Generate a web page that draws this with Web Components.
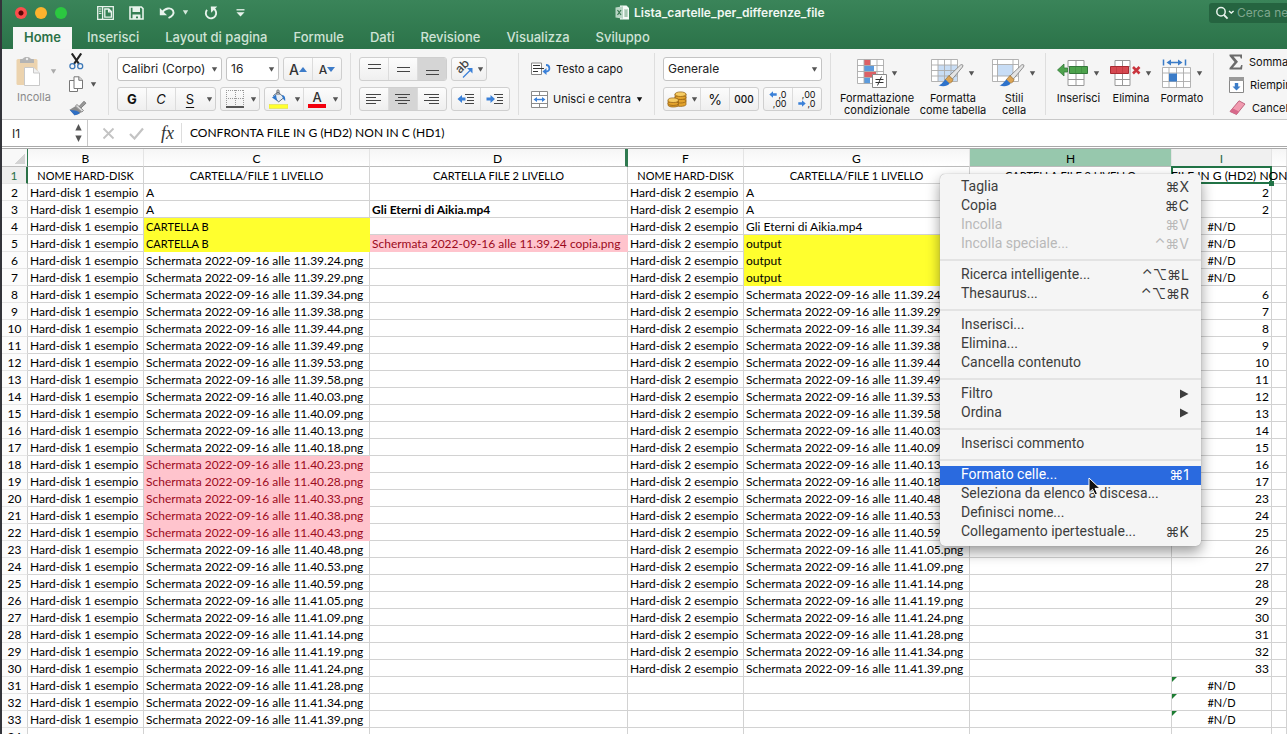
<!DOCTYPE html>
<html lang="it">
<head>
<meta charset="utf-8">
<title>Lista_cartelle_per_differenze_file</title>
<style>
html, body { height: 100%; margin: 0; }
body { overflow: hidden; background: #33343a; font-family: Inter, "Liberation Sans", sans-serif; }
</style>
</head>
<body>
<xl-window></xl-window>
<script>
const ICONS = {
  layout: [17, 14, '<g fill="none" stroke="#e8f3ec" stroke-width="1.3"><path d="M.7.7h15.6v12.6H.7zM5.6.7v12.6M7.8 3h4l2.6 2.6v5.6H7.8zM11.6 3v2.8h2.8"/><path d="M1.8 3h2.6M1.8 5.2h2.6M1.8 7.4h2.6" stroke-width="1"/></g>'],
  save: [15, 14, '<path d="M1 1h11.4L14 2.600V13H1z" fill="none" stroke="#e8f3ec" stroke-width="1.600"/><path d="M3.500 1h7.500v5H3.500zM3.500 8.500h8V13H9V10.500H7V13H3.500z" fill="#e8f3ec"/>'],
  undo: [17, 13, '<path d="M3 6.500C6 2 12 1 14 4.500c1.600 3-.5 5.800-4.500 7.500" fill="none" stroke="#e8f3ec" stroke-width="1.900"/><path d="M.8 2v7.200H8z" fill="#e8f3ec"/>'],
  redo: [14, 14, '<path d="M9.500 2.600A5.200 5.200 0 1 1 3 3.800" fill="none" stroke="#e8f3ec" stroke-width="1.900"/><path d="M6.800.6h6.400L7.200 6.800z" fill="#e8f3ec"/>'],
  more: [9, 8, '<path d="M.5.800h8" stroke="#e8f3ec" stroke-width="1.300"/><path d="M.5 3.200h8L4.500 7.600z" fill="#e8f3ec"/>'],
  book: [15, 15, '<path d="M5 .5h6.500L14 3v11.500H5z" fill="#f4f9f6"/><path d="M9 5h4M9 7h4M9 9h4M9 11h4M11 5v7" stroke="#7aa98c" stroke-width=".8"/><path d="M.5 2.500 8 1.200v12.600L.5 12.500z" fill="#b9d6c5"/><path d="M2.500 5l3.500 5M6 5l-3.500 5" stroke="#39764f" stroke-width="1.200"/>'],
  search: [20, 14, '<circle cx="6" cy="5.800" r="4.200" fill="none" stroke="#e8f3ec" stroke-width="1.500"/><path d="M9 9l3.600 3.600" stroke="#e8f3ec" stroke-width="1.800"/><path d="M14 5l2.300 2L18.600 5" fill="none" stroke="#e8f3ec" stroke-width="1.500"/>'],
  caret: [7, 5, '<path d="M.8.300h5.400L3.500 4.700z" fill="currentColor"/>'],
  paste: [25, 31, '<rect x=".5" y="3" width="21" height="26" rx="1.500" fill="#ecd3ae"/><path d="M4 7V3.800C4 3 5 3 7 2.800 7.500.5 14 .5 14.600 2.800c2 .2 3.400.2 3.400 1V7z" fill="#b4b4b4"/><circle cx="11" cy="3" r="1.200" fill="#eee"/><path d="M8.500 11.500h9l6 5.500v12.500h-15z" fill="#fff" stroke="#c9c9c9"/><path d="M17.500 11.500V17h6" fill="#f1f1f1" stroke="#c9c9c9"/>'],
  cut: [15, 17, '<path d="M2.800.5 10 11M12.200.5 5 11" stroke="#222" stroke-width="2.200"/><circle cx="3.400" cy="13.200" r="2.500" fill="none" stroke="#3c78b8" stroke-width="1.300"/><circle cx="11.200" cy="13.200" r="2.500" fill="none" stroke="#3c78b8" stroke-width="1.300"/>'],
  copy: [15, 17, '<g fill="#fff" stroke="#777"><path d="M.5 4.500h7l1 1v10h-8z"/><path d="M5 .8h5L13.500 4v8.500H5z"/><path d="M9.800.8v3.500h3.700" fill="#ddd"/></g>'],
  brush: [18, 16, '<path d="M10 6.500 15 1.200 17 3.200 12 8z" fill="#999" stroke="#666" stroke-width=".7"/><path d="M8 4.500l6.500 6-1.600 1.600L6.400 6z" fill="#ddd" stroke="#777" stroke-width=".8"/><path d="M6.400 6.200l6.300 5.900C10 14 8 15 5.500 15.200 4 13.500 2 11.500.6 9.800z" fill="#8b8b8b"/><path d="M.6 9.800C3.500 10.500 8 10 11 13c-2 1.500-3.500 2-5.500 2.200z" fill="#2f6fc4"/>'],
  border: [18, 18, '<g fill="none" stroke="#999" stroke-dasharray="1 1"><path d="M.5 0v16M9.500 0v16M17.500 0v16M0 .5h18M0 8.500h18"/></g><path d="M0 17h18" stroke="#222" stroke-width="1.500"/>'],
  fill: [19, 20, '<path d="M4.500 6.500 9 3l6 5.500L9.500 13z" fill="#e8eef5" stroke="#5b6d80"/><path d="M8 6V1.800C8 .5 10 .5 10 1.800V6" fill="none" stroke="#666"/><path d="M13 6c2.600.4 3.500 2 3.200 6-1.800-1-2.600-3-3.200-6z" fill="#2f77cc"/><path d="M3 8.500 7 5.500l1 6.500z" fill="#2f77cc"/><rect y="15.500" width="19" height="4" fill="#ffff2e" stroke="#d6d64a" stroke-width=".5"/>'],
  orient: [18, 18, '<text x="0" y="0" transform="translate(5 14) rotate(-45)" font-family="Inter, sans-serif" font-size="12" font-weight="500" fill="#444">ab</text><path d="M8 17.500 15 10.500" stroke="#3a80d8" stroke-width="1.300"/><path d="M17.500 8v5.500L12 8z" fill="#3a80d8"/>'],
  top: [13, 12, '<path d="M0 1.500h13M0 5.500h13" stroke="#444"/>'],
  mid: [13, 12, '<path d="M0 4.500h13M0 8.500h13" stroke="#444"/>'],
  bot: [13, 12, '<path d="M0 7.500h13M0 11.500h13" stroke="#444"/>'],
  left: [16, 12, '<path d="M0 1.500h15M0 4.500h10M0 7.500h15M0 10.500h10" stroke="#444"/>'],
  center: [16, 12, '<path d="M0 1.500h15M3 4.500h9M0 7.500h15M3 10.500h9" stroke="#444"/>'],
  right: [16, 12, '<path d="M0 1.500h15M5 4.500h10M0 7.500h15M5 10.500h10" stroke="#444"/>'],
  outdent: [18, 12, '<path d="M8 1.500h9M10 4.500h7M10 7.500h7M8 10.500h9" stroke="#444"/><path d="M.5 6 5 2v2.500h3.500v3H5V10z" fill="#3a80d8"/>'],
  indent: [18, 12, '<path d="M8 1.500h9M11 4.500h6M11 7.500h6M8 10.500h9" stroke="#444"/><path d="M9 6 4.500 2v2.500H.5v3h4V10z" fill="#3a80d8"/>'],
  wrap: [20, 14, '<path d="M.5 1h10v11.500H.5z" fill="#fff" stroke="#888"/><path d="M2 3.500h7M2 6.500h11M2 9.500h5" stroke="#333"/><path d="M15 3c4 0 5 6 0 6.500" fill="none" stroke="#3a80d8" stroke-width="1.800"/><path d="M11.500 9.500 15.500 6v7z" fill="#3a80d8"/>'],
  merge: [17, 17, '<path d="M.5.5h16v16H.5zM.5 4.500h16M.5 12.500h16M8.500.5v4M8.500 12.500v4" fill="#fff" stroke="#8b8b8b"/><path d="M4 8.500h9" stroke="#3a80d8" stroke-width="1.400"/><path d="M2.500 8.500 6 6v5zM14.500 8.500 11 6v5z" fill="#3a80d8"/>'],
  coins: [20, 17, '<g fill="#e3a32c" stroke="#8f5c10" stroke-width=".7"><path d="M8 10v3.500c0 2.500 11 2.500 11 0V3H8z"/><ellipse cx="13.500" cy="10" rx="5.500" ry="2"/><ellipse cx="13.500" cy="6.500" rx="5.500" ry="2"/><ellipse cx="13.500" cy="3.200" rx="5.500" ry="2.300" fill="#f7cc62"/><path d="M1 9.500V14c0 2.700 10.500 2.700 10.500 0V9.500z"/><ellipse cx="6.200" cy="12.500" rx="5.200" ry="2"/><ellipse cx="6.200" cy="9.200" rx="5.200" ry="2.300" fill="#f7cc62"/></g>'],
  arrl: [8, 7, '<path d="M.3 3.500 4 .3v2h3.700v2.400H4v2z" fill="#3a80d8"/>'],
  arrr: [8, 7, '<path d="M7.700 3.500 4 .3v2H.3v2.400H4v2z" fill="#3a80d8"/>'],
  cond: [30, 29, '<path d="M.5.500h26v24H.5z" fill="#fff"/><path d="M7 .5h6v6H7zM7 12.500h12v6H7z" fill="#dd6166"/><path d="M7 6.500h10v6H7zM7 18.500h6v6H7z" fill="#5c9bdd"/><path d="M.5.500h26v24H.5zM7 .5v24M13.500.5v6M20 .5v24M.5 6.500h26M.5 12.500h26M.5 18.500h26" fill="none" stroke="#aaa" stroke-width=".9"/><path d="M15.500 15.500h14v13h-14z" fill="#fff" stroke="#888"/><path d="M18.500 20.500h8M18.500 23.500h8M24.500 17.500l-4 9" stroke="#333"/>'],
  table: [33, 28, '<path d="M.5.500h26v22H.5z" fill="#fff"/><path d="M7 6h19v16H7z" fill="#c8ddf5"/><path d="M.5.500h26v22H.5zM7 .5v22M13.500.5v22M20 .5v22M.5 6h26M.5 11.500h26M.5 17h26" fill="none" stroke="#aaa" stroke-width=".9"/><path d="M29.500 6 18 17l3 3.500L31.500 8c1-2 .0-3-2-2z" fill="#e4e4e4" stroke="#777" stroke-width=".8"/><path d="M18 16.500l4 4c-1 4-4 4-6 3l-2-2.500z" fill="#dba455" stroke="#8a6020" stroke-width=".6"/><path d="M14.500 20.500l4 4c-2 3-7 3.500-11 1.800 3.500-.8 4.500-3.800 7-5.800z" fill="#2f73cb"/>'],
  style: [33, 28, '<path d="M.5.500h26v22H.5z" fill="#fff"/><path d="M6 6h15v11H6z" fill="#c8ddf5"/><path d="M.5.500h26v22H.5zM5.500.5v22M21 .5v22M.5 5.500h26M.5 17h26" fill="none" stroke="#aaa" stroke-width=".9"/><path d="M29.500 6 18 17l3 3.500L31.500 8c1-2 .0-3-2-2z" fill="#e4e4e4" stroke="#777" stroke-width=".8"/><path d="M18 16.500l4 4c-1 4-4 4-6 3l-2-2.500z" fill="#dba455" stroke="#8a6020" stroke-width=".6"/><path d="M14.500 20.500l4 4c-2 3-7 3.500-11 1.800 3.500-.8 4.500-3.800 7-5.800z" fill="#2f73cb"/>'],
  ins: [32, 27, '<path d="M11 .5h16v25H11zM19 .5v25M11 6.500h16M11 19.500h16" fill="#fff" stroke="#999"/><path d="M12.500 6.500h18v7h-18z" fill="#4da24c" stroke="#34783a"/><path d="M18.500 6.500v7M24.500 6.500v7" stroke="#3c8a40" stroke-width=".6"/><path d="M.5 10 7 4v4h3.500v4H7v4z" fill="#4da24c" stroke="#34783a" stroke-width=".8"/>'],
  del: [31, 27, '<path d="M5 .5h15v25H5zM12.500.5v25M5 6.500h15M5 19.500h15" fill="#fff" stroke="#999"/><path d="M.5 6.500h18v7H.5z" fill="#d54850" stroke="#a82a32"/><path d="M6.500 6.500v7M12.500 6.500v7" stroke="#b9353d" stroke-width=".6"/><path d="M23 7l6.500 6.500M29.500 7 23 13.500" stroke="#c9343d" stroke-width="2.600"/>'],
  fmt: [30, 29, '<path d="M1.500.5v6M23.500.5v6M7 3.500h11" stroke="#3b7cc8" stroke-width="1.500"/><path d="M4.500 3.500 9 .5v6zM20.500 3.500 16 .5v6z" fill="#3b7cc8"/><path d="M.5 8.500h28v20H.5zM7 8.500v20M14.500 8.500v20M21.500 8.500v20M.5 14h28M.5 22.500h28" fill="#fff" stroke="#aaa" stroke-width=".9"/><path d="M7 14.500h8v8H7z" fill="#3b7cc8"/>'],
  sum: [14, 16, '<path d="M.5.500h12.500v4h-1.200L11 2.500H4.500L9 7.800 4 13.500h7.200l1-2.500h1.300l-.5 4.500H.5V14l5-6-5-6z" fill="#6b6b6b"/>'],
  down: [15, 16, '<path d="M.5.500h14v15H.5z" fill="#fff" stroke="#888"/><path d="M0 0h15v4H0z" fill="#999"/><path d="M7.500 13.500 3.500 9.500h2.300V6h3.400v3.500h2.300z" fill="#3b7cc8"/>'],
  erase: [17, 16, '<path d="M10 .8 16 4 7.500 14.500 1 11.500z" fill="#f19aaf" stroke="#b0506c" stroke-width=".8"/><path d="M1 11.500l6.500 3 2.500-3L3.500 8.200z" fill="#d7688a"/>'],
  cross: [13, 13, '<path d="M1.500 1.500l10 10M11.500 1.500l-10 10" stroke="#c3c3c3" stroke-width="1.800"/>'],
  tick: [15, 13, '<path d="M1 7l4.500 4.500L14 1.500" fill="none" stroke="#c3c3c3" stroke-width="2.200"/>'],
  spin: [7, 18, '<path d="M3.500 0l3.200 6.500H.3zM3.500 18 .3 11.500h6.400z" fill="#555"/>'],
  sub: [9, 10, '<path d="M0 .5v9l8.500-4.500z" fill="currentColor"/>'],
  cursor: [13, 19, '<path d="M1 1v14.500l3.500-3.200L7 17.800l2.500-1-2.400-5.400H12z" fill="#111" stroke="#fff"/>']
};

function define(name, html, setup) {
  const template = document.createElement('template');
  template.innerHTML = html;
  customElements.define(name, class extends HTMLElement {
    constructor() {
      super();
      this.attachShadow({ mode: 'open' }).append(template.content.cloneNode(true));
    }
    connectedCallback() {
      if (setup && !this.ready) { this.ready = true; setup(this, this.shadowRoot); }
    }
  });
}

define('xl-icon', '<style>:host{display:inline-flex;flex:none}svg{display:block}</style>', (el, root) => {
  const [w, h, body] = ICONS[el.getAttribute('name')];
  root.innerHTML += `<svg width="${w}" height="${h}" viewBox="0 0 ${w} ${h}" aria-hidden="true">${body}</svg>`;
});

/* Title bar */
define('xl-titlebar', `
<style>
:host { display: flex; align-items: center; height: 25px; color: #fff; }
.lights { display: flex; gap: 8px; margin-left: 13px; width: 82px; }
.lights i { width: 12px; height: 12px; border-radius: 50%; background: #fdb32e; }
.lights i:first-child { background: radial-gradient(circle, #5a0505 2px, #fb4e4c 3px); }
.lights i:last-child { background: #2bc840; }
button { all: unset; display: flex; align-items: center; height: 20px; }
.quick { display: flex; width: 518px; align-items: center; color: #d5e8dc; }
.quick button { margin-right: 15px; }
.quick .tight { margin-right: 6px; }
.quick .wide { margin-right: 18px; }
h1 { display: flex; align-items: center; gap: 4px; margin: 0; font-size: 12px; line-height: 20px; font-weight: 600; flex: 1; white-space: nowrap; color: #f0f7f2; }
label { display: flex; align-items: center; gap: 2px; width: 72px; height: 20px; padding-left: 6px; background: #256440; border-radius: 3px 0 0 3px; overflow: hidden; }
input { all: unset; font-size: 12px; width: 110px; flex: none; }
input::placeholder { color: #7fa78e; }
</style>
<div class="lights"><i></i><i></i><i></i></div>
<div class="quick">
<button aria-label="Barra laterale"><xl-icon name="layout"></xl-icon></button>
<button aria-label="Salva"><xl-icon name="save"></xl-icon></button>
<button class="tight" aria-label="Annulla"><xl-icon name="undo"></xl-icon></button>
<button aria-label="Opzioni annulla"><xl-icon name="caret"></xl-icon></button>
<button class="wide" aria-label="Ripeti"><xl-icon name="redo"></xl-icon></button>
<button aria-label="Personalizza"><xl-icon name="more"></xl-icon></button>
</div>
<h1><xl-icon name="book"></xl-icon>Lista_cartelle_per_differenze_file</h1>
<label><xl-icon name="search"></xl-icon><input placeholder="Cerca nel foglio" aria-label="Cerca nel foglio"></label>`);

define('xl-tabs', `
<style>
:host { display: flex; height: 22px; margin-top: 2px; padding-left: 11px; }
a { display: block; padding: 0 13px; font-size: 13px; line-height: 21px; font-weight: 500; color: #cfe3d6; text-decoration: none; white-space: nowrap; }
a[aria-current] { padding: 0 11px; margin-right: 2px; background: #f6f6f6; color: #2b7147; font-weight: 600; }
</style>
<a href="#home" aria-current="page">Home</a><a href="#ins">Inserisci</a><a href="#lay">Layout di pagina</a><a href="#for">Formule</a><a href="#dat">Dati</a><a href="#rev">Revisione</a><a href="#vis">Visualizza</a><a href="#svi">Sviluppo</a>`);

/* Segmented set of buttons, and one button within it */
define('xl-seg', `
<style>:host{display:flex;flex:none;box-sizing:border-box;height:24px;border:1px solid #cfcfcf;border-radius:3px;overflow:hidden;background:linear-gradient(#fcfcfc,#efefef)}</style><slot></slot>`);
define('xl-btn', `
<style>
:host { display: flex; box-sizing: border-box; width: var(--w, 29px); border-left: 1px solid #dcdcdc; }
:host(:first-child), :host([caret]) { border-left-color: transparent; margin-left: -1px; }
:host([pressed]) { background: #d5d5d5; }
:host([caret]) { --w: 12px; color: #555; }
button { all: unset; flex: 1; display: flex; align-items: center; justify-content: center; }
</style><button><slot></slot></button>`, (el, root) => root.querySelector('button').setAttribute('aria-label', el.getAttribute('label') || 'Opzioni'));

define('xl-select', `
<style>
:host { display: flex; position: relative; box-sizing: border-box; height: 24px; border: 1px solid #c4c4c4; border-radius: 3px; background: #fff; }
select { appearance: none; border: 0; background: none; width: 100%; padding: 0 0 0 4px; font: 12px/20px Inter, "Liberation Sans", sans-serif; color: #222; }
xl-icon { position: absolute; right: 3px; top: 9px; color: #555; }
</style><select></select><xl-icon name="caret"></xl-icon>`, (el, root) => {
  const s = root.querySelector('select');
  s.add(new Option(el.getAttribute('value')));
  s.setAttribute('aria-label', el.getAttribute('label'));
});

/* Large ribbon button: picture, arrow and a caption below */
define('xl-big', `
<style>
:host { display: flex; flex: none; width: var(--w); }
button { all: unset; flex: 1; display: flex; flex-direction: column; align-items: center; align-self: start; color: #111; }
.pic { display: flex; align-items: center; gap: 4px; height: 32px; color: #555; }
.cap { font-size: 11px; line-height: 12px; text-align: center; margin-top: 3px; white-space: nowrap; }
</style><button><span class="pic"><xl-icon name="caret"></xl-icon></span><span class="cap"><slot></slot></span></button>`, (el, root) => {
  const i = document.createElement('xl-icon');
  i.setAttribute('name', el.getAttribute('icon'));
  root.querySelector('.pic').prepend(i);
});

define('xl-ribbon', `
<style>
:host { display: flex; height: 70px; background: #f5f5f5; border-bottom: 1px solid #c8c8c8; font-size: 11px; color: #111; }
section { flex: none; display: flex; box-sizing: border-box; padding: 4px 8px 0; height: 62px; margin-top: 4px; border-right: 1px solid #dedede; }
section:last-child { border: 0; }
.rows { display: grid; gap: 6px; align-content: start; }
.row { display: flex; gap: 4px; height: 24px; }
.clip { width: 107px; padding: 0 0 0 14px; gap: 12px; }
.plain { all: unset; display: flex; align-items: center; gap: 5px; color: #111; white-space: nowrap; }
.paste { all: unset; align-self: start; width: 41px; color: #aaa; }
.paste span { display: flex; align-items: center; gap: 9px; height: 36px; }
.paste .name { height: 16px; padding-left: 1px; color: #8a8a8a; }
.small { display: grid; grid-auto-rows: 23px; align-items: center; margin-top: -3px; }
.small button { gap: 6px; color: #555; height: 23px; }
.text { width: 136px; padding-left: 12px; }
.edit { padding: 0 0 0 15px; }
.edit button { color: #111; }
b, i, .u { font-size: 13px; }
.abc { display: flex; align-items: center; font-size: 14px; color: #333; font-weight: 500; }
.abc.less { font-size: 12px; }
.u { text-decoration: underline; text-underline-offset: 3px; }
.clr { display: block; font-size: 13px; line-height: 14px; font-weight: 500; border-bottom: 4px solid #f3000d; width: 18px; text-align: center; color: #333; }
.pct { font-size: 14px; }
.num { font-size: 10px; font-weight: 500; }
.dec { display: grid; font-size: 9px; line-height: 9px; text-align: right; }
.dec span { display: flex; justify-content: flex-end; gap: 1px; align-items: center; }
.bigs { gap: 4px; }
</style>
<section class="clip">
  <button class="paste"><span><xl-icon name="paste"></xl-icon><xl-icon name="caret"></xl-icon></span><span class="name">Incolla</span></button>
  <div class="small">
    <button class="plain" aria-label="Taglia"><xl-icon name="cut"></xl-icon></button>
    <button class="plain" aria-label="Copia"><xl-icon name="copy"></xl-icon><xl-icon name="caret"></xl-icon></button>
    <button class="plain" aria-label="Copia formato"><xl-icon name="brush"></xl-icon></button>
  </div>
</section>
<section><div class="rows">
  <div class="row">
    <xl-select style="width:105px" value="Calibri (Corpo)" label="Tipo di carattere"></xl-select>
    <xl-select style="width:53px" value="16" label="Dimensione"></xl-select>
    <xl-seg><xl-btn label="Aumenta"><span class="abc">A<svg width="8" height="5"><path d="M0 5h8L4 0z" fill="#3d7cc9"/></svg></span></xl-btn><xl-btn label="Riduci"><span class="abc less">A<svg width="8" height="5"><path d="M0 0h8L4 5z" fill="#3d7cc9"/></svg></span></xl-btn></xl-seg>
  </div>
  <div class="row">
    <xl-seg><xl-btn label="Grassetto"><b>G</b></xl-btn><xl-btn label="Corsivo"><i>C</i></xl-btn><xl-btn label="Sottolineato"><span class="u">S</span></xl-btn><xl-btn caret><xl-icon name="caret"></xl-icon></xl-btn></xl-seg>
    <xl-seg><xl-btn label="Bordi" style="--w:28px"><xl-icon name="border"></xl-icon></xl-btn><xl-btn caret><xl-icon name="caret"></xl-icon></xl-btn></xl-seg>
    <xl-seg><xl-btn label="Riempimento" style="--w:28px"><xl-icon name="fill"></xl-icon></xl-btn><xl-btn caret><xl-icon name="caret"></xl-icon></xl-btn><xl-btn label="Colore carattere" style="--w:27px"><span class="clr">A</span></xl-btn><xl-btn caret><xl-icon name="caret"></xl-icon></xl-btn></xl-seg>
  </div>
</div></section>
<section><div class="rows">
  <div class="row">
    <xl-seg><xl-btn label="In alto"><xl-icon name="top"></xl-icon></xl-btn><xl-btn label="Al centro"><xl-icon name="mid"></xl-icon></xl-btn><xl-btn pressed label="In basso"><xl-icon name="bot"></xl-icon></xl-btn></xl-seg>
    <xl-seg><xl-btn label="Orientamento" style="--w:24px"><xl-icon name="orient"></xl-icon></xl-btn><xl-btn caret><xl-icon name="caret"></xl-icon></xl-btn></xl-seg>
  </div>
  <div class="row">
    <xl-seg><xl-btn label="Allinea a sinistra"><xl-icon name="left"></xl-icon></xl-btn><xl-btn pressed label="Centra"><xl-icon name="center"></xl-icon></xl-btn><xl-btn label="Allinea a destra"><xl-icon name="right"></xl-icon></xl-btn></xl-seg>
    <xl-seg><xl-btn label="Riduci rientro"><xl-icon name="outdent"></xl-icon></xl-btn><xl-btn label="Aumenta rientro"><xl-icon name="indent"></xl-icon></xl-btn></xl-seg>
  </div>
</div></section>
<section class="text"><div class="rows">
  <div class="row"><button class="plain"><xl-icon name="wrap"></xl-icon>Testo a capo</button></div>
  <div class="row"><button class="plain"><xl-icon name="merge"></xl-icon><span>Unisci e centra</span><xl-icon name="caret"></xl-icon></button></div>
</div></section>
<section><div class="rows">
  <div class="row"><xl-select style="width:159px" value="Generale" label="Formato numero"></xl-select></div>
  <div class="row">
    <xl-seg><xl-btn label="Valuta" style="--w:26px"><xl-icon name="coins"></xl-icon></xl-btn><xl-btn caret><xl-icon name="caret"></xl-icon></xl-btn><xl-btn label="Percentuale"><span class="pct">%</span></xl-btn><xl-btn label="Migliaia"><span class="num">000</span></xl-btn></xl-seg>
    <xl-seg><xl-btn label="Aumenta decimali"><span class="dec"><span><xl-icon name="arrl"></xl-icon>,0</span><span>,00</span></span></xl-btn><xl-btn label="Diminuisci decimali"><span class="dec"><span>,00</span><span><xl-icon name="arrr"></xl-icon>,0</span></span></xl-btn></xl-seg>
  </div>
</div></section>
<section class="bigs">
  <xl-big icon="cond" style="--w:76px">Formattazione<br>condizionale</xl-big>
  <xl-big icon="table" style="--w:68px">Formatta<br>come tabella</xl-big>
  <xl-big icon="style" style="--w:46px">Stili<br>cella</xl-big>
</section>
<section class="bigs">
  <xl-big icon="ins" style="--w:49px">Inserisci</xl-big>
  <xl-big icon="del" style="--w:48px">Elimina</xl-big>
  <xl-big icon="fmt" style="--w:46px">Formato</xl-big>
</section>
<section class="edit"><div class="small">
  <button class="plain"><xl-icon name="sum"></xl-icon>Somma automatica</button>
  <button class="plain"><xl-icon name="down"></xl-icon>Riempimento</button>
  <button class="plain"><xl-icon name="erase"></xl-icon>Cancella</button>
</div></section>`);

define('xl-formula', `
<style>
:host { display: flex; align-items: center; height: 26px; background: #fff; border-bottom: 3px double #a9a9a9; }
label { display: flex; align-items: center; box-sizing: border-box; width: 86px; height: 26px; padding: 0 5px 0 10px; border-right: 1px solid #c8c8c8; }
input { all: unset; font-size: 12px; color: #222; min-width: 0; flex: 1; }
button { all: unset; display: flex; margin-left: 14px; }
em { font: italic 18px/20px "Liberation Serif", serif; color: #333; margin-left: 17px; width: 20px; }
.text { font: 12px/20px Lato, sans-serif; color: #000; border-left: 1px solid #ddd; padding-left: 8px; }
</style>
<label><input value="I1" aria-label="Casella nome"><xl-icon name="spin"></xl-icon></label>
<button aria-label="Annulla"><xl-icon name="cross"></xl-icon></button>
<button aria-label="Conferma"><xl-icon name="tick"></xl-icon></button>
<em>fx</em>
<input class="text" aria-label="Formula" value="CONFRONTA FILE IN G (HD2) NON IN C (HD1)">`);

/* Worksheet */
define('xl-sheet', `
<style>
:host { display: block; overflow: hidden; background: #fff; }
table { table-layout: fixed; width: 100%; border-spacing: 0; font: 12px/14px Lato, sans-serif; color: #000; }
th, td { box-sizing: border-box; height: 17px; padding: 2px 2px 0; border: solid #d2d2d2; border-width: 0 1px 1px 0; white-space: nowrap; overflow: hidden; font-weight: 400; text-align: left; }
thead th { height: 18px; text-align: center; background: linear-gradient(#f5f5f5, #fff); border-color: #bcbcbc #e4e4e4 #bcbcbc; }
thead th:first-child { background: linear-gradient(135deg, transparent 50%, #d4d4d4 50%) 13px 5px / 10px 10px no-repeat, #f8f8f8; }
thead .edge { border-right: 3px solid #2f7a50; }
thead .corner { border-right: 1px solid #2f7a50; }
thead .on { background: #97c8ad; }
thead .cur { background: #f0f0f0; color: #2b6a48; }
tbody th { text-align: center; background: #fcfcfc; border-bottom-color: #e6e6e6; }
tbody tr:first-child th { background: #eee; color: #2b7147; border-right: 2px solid #2b7147; }
.c { text-align: center; }
.r { text-align: right; }
.k { font-size: 11px; }
.y { background: #ffff2e; border-color: #ffff2e; }
.p { background: #ffc4cd; border-color: #ffc4cd; color: #9c0a1c; }
.b { font-weight: 700; }
.err { background: linear-gradient(135deg, #1e7d33 3px, transparent 4px); }
.sel { position: relative; overflow: visible; padding: 2px 0 0; clip-path: inset(-3px -200px -3px -2px); }
.sel span { display: flex; justify-content: center; clip-path: inset(0 -200px 0 0); }
.sel::before { content: ""; position: absolute; inset: -1px; border: 2px solid #217346; }
.sel::after { content: ""; position: absolute; right: -3px; bottom: -3px; width: 5px; height: 5px; background: #217346; }
</style>
<table><colgroup><col style="width:26px"><col style="width:116px"><col style="width:226px"><col style="width:258px"><col style="width:116px"><col style="width:226px"><col style="width:202px"><col style="width:100px"><col></colgroup><thead></thead><tbody></tbody></table>`, (el, root) => {
  const early = '39.24 39.29 39.34 39.38 39.44 39.49 39.53 39.58 40.03 40.09 40.13 40.18'.split(' ');
  const only1 = '40.23 40.28 40.33 40.38 40.43'.split(' ');
  const late = '40.48 40.53 40.59 41.05 41.09 41.14 41.19 41.24 41.28 41.34 41.39'.split(' ');
  const shot = t => `Schermata 2022-09-16 alle 11.${t}.png`;
  const colC = [...early, ...only1, ...late], colG = [...early, ...late];
  const td = (text = '', cls = '') => `<td class="${cls}">${text}</td>`;
  root.querySelector('thead').innerHTML = '<tr><th class="corner"></th><th>B</th><th>C</th><th class="edge">D</th><th>F</th><th>G</th><th class="on">H</th><th class="cur">I</th><th></th></tr>';
  let out = '<tr><th>1</th>' + ['NOME HARD-DISK', 'CARTELLA/FILE 1 LIVELLO', 'CARTELLA FILE 2 LIVELLO', 'NOME HARD-DISK', 'CARTELLA/FILE 1 LIVELLO', 'CARTELLA FILE 2 LIVELLO'].map(t => td(t, 'c k')).join('')
    + td('<span>CONFRONTA FILE IN G (HD2) NON IN C (HD1)</span>', 'sel') + td() + '</tr>';
  for (let n = 2; n <= 34; n++) {
    const a = n < 34, b = n < 31;
    let c = td(), d = td(), g = td(), i = td();
    if (n < 4) c = td('A');
    else if (n < 6) c = td('CARTELLA B', 'y k');
    else if (a) c = td(shot(colC[n - 6]), n > 17 && n < 23 ? 'p' : '');
    if (n === 3) d = td('Gli Eterni di Aikia.mp4', 'b');
    if (n === 5) d = td('Schermata 2022-09-16 alle 11.39.24 copia.png', 'p');
    if (n < 4) g = td('A');
    else if (n === 4) g = td('Gli Eterni di Aikia.mp4');
    else if (n < 8) g = td('output', 'y');
    else if (b) g = td(shot(colG[n - 8]));
    if (n < 4) i = td(2, 'r');
    else if (n < 8) i = td('#N/D', 'c k');
    else if (n < 20) i = td(n - 2, 'r');
    else if (b) i = td(n + 3, 'r');
    else if (a) i = td('#N/D', 'c k err');
    out += `<tr><th>${n}</th>${td(a ? 'Hard-disk 1 esempio' : '')}${c}${d}${td(b ? 'Hard-disk 2 esempio' : '')}${g}${td()}${i}${td()}</tr>`;
  }
  root.querySelector('tbody').innerHTML = out;
});

/* Context menu */
define('xl-item', `
<style>
:host { display: block; color: #3d3d3d; }
:host([off]) { color: #b9b9b9; }
:host([hot]) { background: #2a6adf; color: #fff; }
button { all: unset; box-sizing: border-box; display: flex; justify-content: space-between; align-items: center; width: 100%; height: 19px; padding: 0 12px 2px 21px; font-size: 14px; line-height: 17px; white-space: nowrap; }
</style><button role="menuitem"><slot></slot><slot name="key"></slot></button>`);
define('xl-menu', `
<style>
:host { display: block; box-sizing: border-box; padding: 4px 0; background: #f5f5f5; border-radius: 5px; box-shadow: 0 0 1px #888, 0 6px 14px rgba(0,0,0,.4); font-family: Roboto, "Liberation Sans", sans-serif; }
hr { border: 0; height: 2px; margin: 5px 0; background: #e3e3e3; }
span { font-family: Inter, sans-serif; }
.cursor { position: absolute; left: 148px; top: 303px; }
</style>
<xl-item>Taglia<span slot="key">⌘X</span></xl-item>
<xl-item>Copia<span slot="key">⌘C</span></xl-item>
<xl-item off>Incolla<span slot="key">⌘V</span></xl-item>
<xl-item off>Incolla speciale...<span slot="key">⌃⌘V</span></xl-item>
<hr>
<xl-item>Ricerca intelligente...<span slot="key">⌃⌥⌘L</span></xl-item>
<xl-item>Thesaurus...<span slot="key">⌃⌥⌘R</span></xl-item>
<hr>
<xl-item>Inserisci...</xl-item>
<xl-item>Elimina...</xl-item>
<xl-item>Cancella contenuto</xl-item>
<hr>
<xl-item>Filtro<xl-icon slot="key" name="sub"></xl-icon></xl-item>
<xl-item>Ordina<xl-icon slot="key" name="sub"></xl-icon></xl-item>
<hr>
<xl-item>Inserisci commento</xl-item>
<hr>
<xl-item hot>Formato celle...<span slot="key">⌘1</span></xl-item>
<xl-item>Seleziona da elenco a discesa...</xl-item>
<xl-item>Definisci nome...</xl-item>
<xl-item>Collegamento ipertestuale...<span slot="key">⌘K</span></xl-item>
<xl-icon class="cursor" name="cursor"></xl-icon>`);

define('xl-window', `
<style>
:host { display: flex; flex-direction: column; height: 100vh; margin-left: 2px; background: #fff; overflow: hidden; position: relative; }
header { background: linear-gradient(#3a8459, #2b7349); }
xl-sheet { flex: 1; min-height: 0; }
xl-menu { position: absolute; left: 938px; top: 174px; width: 261px; }
</style>
<header><xl-titlebar></xl-titlebar><xl-tabs></xl-tabs></header>
<xl-ribbon></xl-ribbon>
<xl-formula></xl-formula>
<xl-sheet></xl-sheet>
<xl-menu role="menu"></xl-menu>`);
</script>
</body>
</html>
